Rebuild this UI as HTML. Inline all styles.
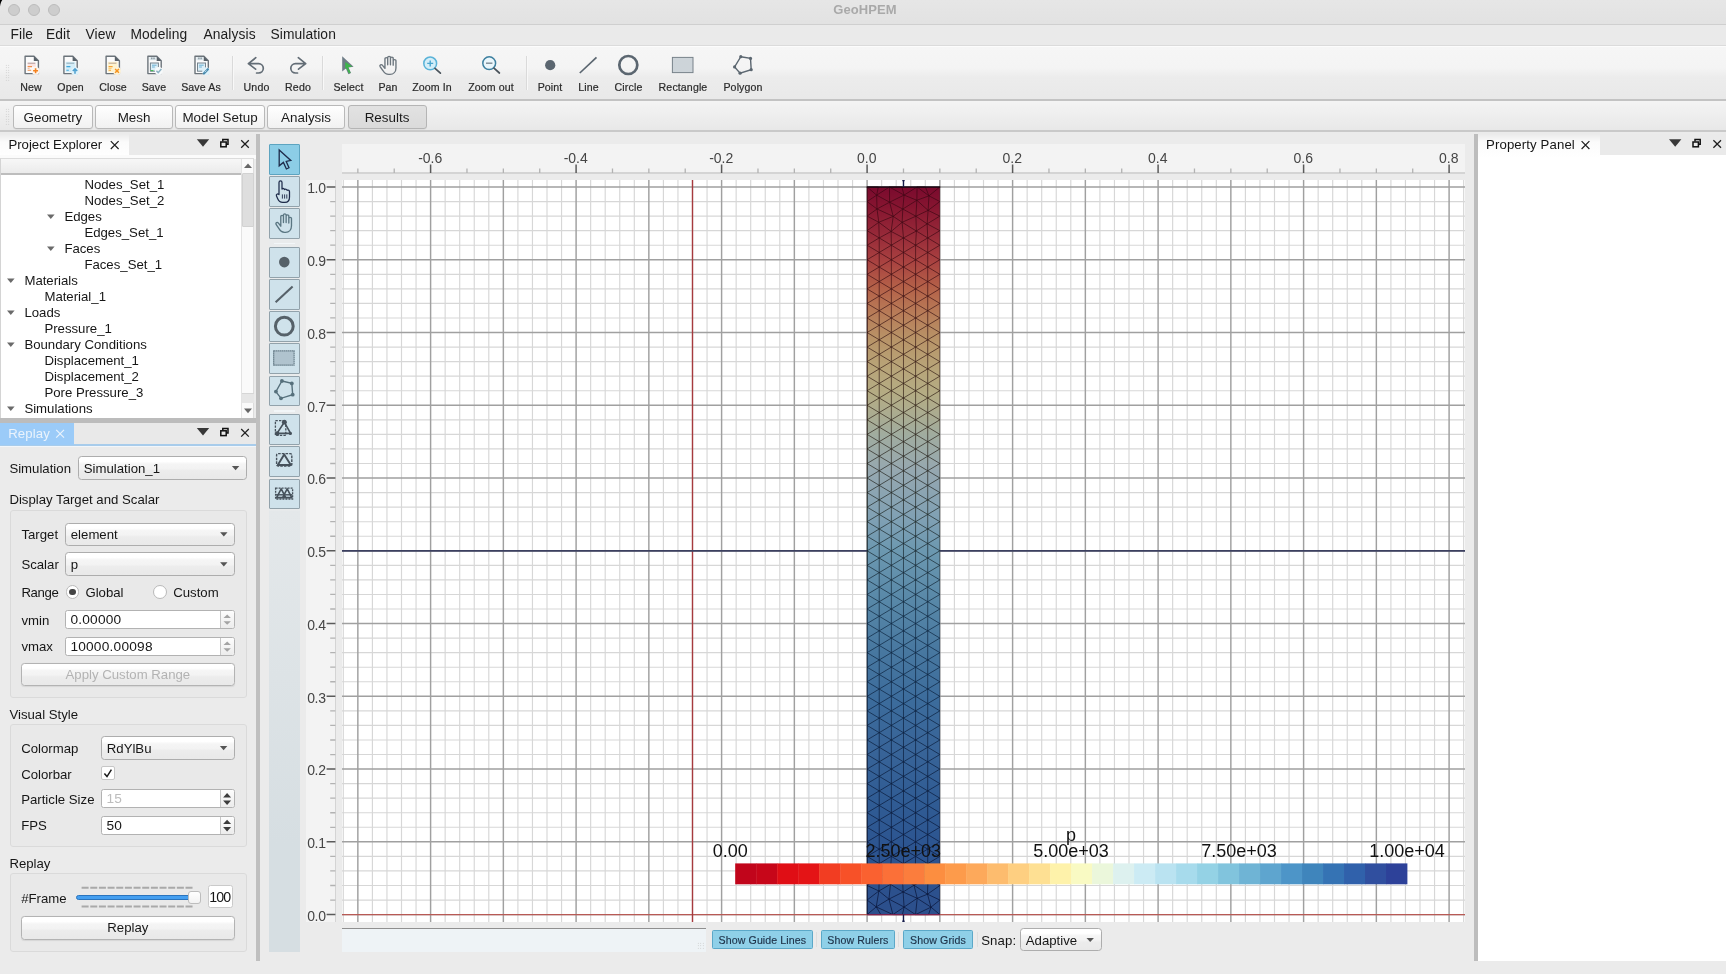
<!DOCTYPE html>
<html><head><meta charset="utf-8"><title>GeoHPEM</title>
<style>
*{box-sizing:border-box;margin:0;padding:0}
html,body{width:1726px;height:974px;overflow:hidden;background:#ebebeb;font-family:"Liberation Sans",sans-serif;font-size:13px;color:#1a1a1a}
.a{position:absolute}
.t{position:absolute;white-space:nowrap;line-height:16px;height:16px}
svg{position:absolute;overflow:visible}
#titlebar{left:0;top:0;width:1726px;height:25px;background:linear-gradient(#e6e6e6,#e2e2e2);border-bottom:1px solid #cfcfcf}
.tl{position:absolute;top:4px;width:12px;height:12px;border-radius:6px;background:#cdcdcd;border:0.9px solid #bcbcbc}
#title{left:2px;width:1726px;text-align:center;top:1.9px;font-weight:bold;font-size:13px;color:#a9a9a9;letter-spacing:0.1px}
#menubar{left:0;top:25px;width:1726px;height:20.6px;background:#eaeaea;border-bottom:1.6px solid #dbdbdb}
.menu{top:26.6px;font-size:13.8px;color:#1c1c1c;letter-spacing:0.1px}
#toolbar{left:0;top:45.6px;width:1726px;height:55.8px;background:linear-gradient(#f6f6f6 0,#f4f4f4 40%,#ececec 58%,#e9e9e9 100%);border-top:1px solid #fcfcfc;border-bottom:2px solid #c3c3c3}
.tbl{font-size:10.6px;color:#2a2a2a;top:79px;text-align:center;letter-spacing:0.12px;-webkit-text-stroke:0.2px #2a2a2a}
.sep{position:absolute;top:56px;width:1px;height:34px;background:#dadada;border-right:1px solid #f8f8f8;width:2px}
#tabbar{left:0;top:101.4px;width:1726px;height:30.4px;background:linear-gradient(#f4f4f4,#e8e8e8);border-bottom:2px solid #c9c9c9}
.tabbtn{position:absolute;top:105.4px;height:23.2px;border:1px solid #b9b9b9;border-radius:3px;background:linear-gradient(#ffffff,#f1f1f1);font-size:13.4px;text-align:center;line-height:23.4px;color:#1a1a1a;box-shadow:0 0.5px 0.5px rgba(0,0,0,0.08)}
.tabbtn.sel{background:linear-gradient(#e2e2e2,#dadada);border-color:#b5b5b5}
.grip{position:absolute;width:5px;background-image:radial-gradient(circle,#c4c4c4 0.6px,transparent 0.8px);background-size:2.5px 2.5px}

.dockhdr{position:absolute;height:21px;background:#eaeaea}
.ui{font-size:13.2px;color:#161616}
.t.ui{margin-top:0.7px}
.tree{font-size:13.2px;color:#161616}
.combo{position:absolute;border:1px solid #adadad;border-radius:3.5px;background:linear-gradient(#ffffff 0,#ffffff 20%,#f5f5f5 32%,#f3f3f3 52%,#ececec 62%,#e9e9e9 100%)}
.combo .t{top:3.4px;left:4.6px}
.spin{position:absolute;border:1px solid #b2b2b2;border-radius:2.5px;background:#fff}
.spin .t{top:0.7px;left:4.2px;letter-spacing:0.22px;font-size:13.7px}
.spin .st{position:absolute;right:0;top:0;bottom:0;width:14px;border-left:1px solid #c6c6c6;background:linear-gradient(#fdfdfd,#ececec);border-radius:0 2px 2px 0}
.gbox{position:absolute;border:1px solid #dadada;border-radius:3px;background:#e9e9e9}
.btn{position:absolute;border:1px solid #b3b3b3;border-radius:3.5px;background:linear-gradient(#ffffff 0,#ffffff 20%,#f5f5f5 32%,#f3f3f3 52%,#ececec 62%,#e9e9e9 100%);text-align:center;font-size:13.2px;box-shadow:0 0.5px 1px rgba(0,0,0,0.08)}

.vbtn{position:absolute;left:269.2px;width:30.8px;height:30.4px;background:#cfe2eb;border:1px solid #92a2ab;border-radius:1px}
.vbtn.sel{background:#8ccde6;border-color:#5da4c0}
.sbtn{position:absolute;top:930.2px;height:18.6px;background:#8fd0e8;border:1px solid #5ba8c8;border-radius:1.5px;font-size:10.6px;letter-spacing:0.1px;color:#1d3148;text-align:center;line-height:18.2px;-webkit-text-stroke:0.15px #1d3148}

#root{position:absolute;left:0;top:0;width:1726px;height:974px;will-change:transform}
.rl{font-size:14px;color:#454545;letter-spacing:0}
.rl.lft{letter-spacing:-0.3px}
.cbl{font-size:18px;color:#111;line-height:20px;height:20px}
</style></head>
<body>
<div id="root">
<div id="titlebar" class="a"></div>
<div class="tl" style="left:8px"></div>
<div class="tl" style="left:28px"></div>
<div class="tl" style="left:48px"></div>
<div id="title" class="t">GeoHPEM</div>
<div id="menubar" class="a"></div>
<div class="t menu" style="left:10.5px">File</div>
<div class="t menu" style="left:46px">Edit</div>
<div class="t menu" style="left:85.5px">View</div>
<div class="t menu" style="left:130.5px">Modeling</div>
<div class="t menu" style="left:203.5px">Analysis</div>
<div class="t menu" style="left:270.5px">Simulation</div>
<div id="toolbar" class="a"></div>
<div class="grip" style="left:5px;top:64px;height:18px"></div>
<div class="t tbl" style="left:-9px;width:80px">New</div>
<div class="t tbl" style="left:30.5px;width:80px">Open</div>
<div class="t tbl" style="left:73px;width:80px">Close</div>
<div class="t tbl" style="left:114px;width:80px">Save</div>
<div class="t tbl" style="left:161px;width:80px">Save As</div>
<div class="t tbl" style="left:216.5px;width:80px">Undo</div>
<div class="t tbl" style="left:258px;width:80px">Redo</div>
<div class="t tbl" style="left:308.5px;width:80px">Select</div>
<div class="t tbl" style="left:348px;width:80px">Pan</div>
<div class="t tbl" style="left:392px;width:80px">Zoom In</div>
<div class="t tbl" style="left:451px;width:80px">Zoom out</div>
<div class="t tbl" style="left:510px;width:80px">Point</div>
<div class="t tbl" style="left:548.5px;width:80px">Line</div>
<div class="t tbl" style="left:588.5px;width:80px">Circle</div>
<div class="t tbl" style="left:643px;width:80px">Rectangle</div>
<div class="t tbl" style="left:703px;width:80px">Polygon</div>
<div class="sep" style="left:232px"></div>
<div class="sep" style="left:322px"></div>
<div class="sep" style="left:526px"></div>
<div id="tabbar" class="a"></div>
<div class="grip" style="left:5px;top:108px;height:18px"></div>
<div class="tabbtn" style="left:13.2px;width:79.5px">Geometry</div>
<div class="tabbtn" style="left:94.7px;width:78.7px">Mesh</div>
<div class="tabbtn" style="left:175.4px;width:89.2px">Model Setup</div>
<div class="tabbtn" style="left:266.6px;width:78.9px">Analysis</div>
<div class="tabbtn sel" style="left:347.5px;width:79px">Results</div>
<div class="dockhdr" style="left:0;top:134px;width:256px"></div>
<div class="a" style="left:0;top:134px;width:129px;height:24px;background:linear-gradient(#ebebeb 0,#f1f1f1 3px,#fbfbfb 8px,#ffffff)"></div>
<div class="a" style="left:0;top:155px;width:256px;height:4px;background:#fbfbfb"></div>
<div class="t ui" style="left:8.4px;top:136.8px">Project Explorer</div>
<div class="a" style="left:0;top:158px;width:254.4px;height:260px;background:#fff;border-top:1px solid #dcdcdc;border-left:1px solid #d4d4d4"></div>
<div class="a" style="left:1px;top:159px;width:240px;height:16px;background:linear-gradient(#f7f7f7,#ebebeb);border-bottom:2px solid #bdbdbd"></div>
<div class="a" style="left:241px;top:159px;width:13.2px;height:259px;background:#fafafa;border-left:1px solid #e3e3e3;border-right:1px solid #dcdcdc"></div>
<div class="a" style="left:241.5px;top:173px;width:12.6px;height:54px;background:#dedede;border:1px solid #d2d2d2;border-radius:1px"></div>
<div class="a" style="left:241.5px;top:393px;width:12.4px;height:10px;background:#e6e6e6;border-top:1px solid #d6d6d6"></div>
<div class="t tree" style="left:84.4px;top:176.6px">Nodes_Set_1</div>
<div class="t tree" style="left:84.4px;top:192.6px">Nodes_Set_2</div>
<div class="t tree" style="left:64.4px;top:208.6px">Edges</div>
<div class="t tree" style="left:84.4px;top:224.6px">Edges_Set_1</div>
<div class="t tree" style="left:64.4px;top:240.6px">Faces</div>
<div class="t tree" style="left:84.4px;top:256.6px">Faces_Set_1</div>
<div class="t tree" style="left:24.4px;top:272.6px">Materials</div>
<div class="t tree" style="left:44.4px;top:288.6px">Material_1</div>
<div class="t tree" style="left:24.4px;top:304.6px">Loads</div>
<div class="t tree" style="left:44.4px;top:320.6px">Pressure_1</div>
<div class="t tree" style="left:24.4px;top:336.6px">Boundary Conditions</div>
<div class="t tree" style="left:44.4px;top:352.6px">Displacement_1</div>
<div class="t tree" style="left:44.4px;top:368.6px">Displacement_2</div>
<div class="t tree" style="left:44.4px;top:384.6px">Pore Pressure_3</div>
<div class="t tree" style="left:24.4px;top:400.6px">Simulations</div>
<div class="a" style="left:0;top:418px;width:256px;height:4.6px;background:#bcbcbc"></div>
<div class="a" style="left:0;top:422.6px;width:256px;height:21.6px;background:#e9e9e9"></div>
<div class="a" style="left:0;top:444px;width:256px;height:2px;background:#a8cceb"></div>
<div class="a" style="left:0;top:446px;width:256px;height:1.2px;background:#f2f6fa"></div>
<div class="a" style="left:0;top:422.6px;width:74px;height:22.6px;background:#9bcbf8"></div>
<div class="t ui" style="left:8.2px;top:425.6px;color:#eaf3fc;letter-spacing:0.1px">Replay</div>
<div class="t ui" style="left:9.4px;top:460.4px">Simulation</div>
<div class="combo ui" style="left:78.2px;top:456.4px;width:168.4px;height:23.2px"><div class="t">Simulation_1</div></div>
<div class="t ui" style="left:9.4px;top:491.8px">Display Target and Scalar</div>
<div class="gbox" style="left:10px;top:510.4px;width:236.6px;height:188px"></div>
<div class="t ui" style="left:21.4px;top:526.4px">Target</div>
<div class="combo ui" style="left:65.2px;top:522.5px;width:169.6px;height:23.2px"><div class="t">element</div></div>
<div class="t ui" style="left:21.4px;top:556.4px">Scalar</div>
<div class="combo ui" style="left:65.2px;top:552.4px;width:169.6px;height:23.2px"><div class="t">p</div></div>
<div class="t ui" style="left:21.4px;top:584.2px;letter-spacing:-0.35px">Range</div>
<div class="a" style="left:65.8px;top:585.2px;width:13.4px;height:13.4px;border-radius:7px;background:#fff;border:1px solid #b9b9b9"></div>
<div class="a" style="left:69.3px;top:588.7px;width:6.4px;height:6.4px;border-radius:3.2px;background:#444"></div>
<div class="t ui" style="left:85.4px;top:584.2px">Global</div>
<div class="a" style="left:153.4px;top:585.2px;width:13.4px;height:13.4px;border-radius:7px;background:#fff;border:1px solid #b9b9b9"></div>
<div class="t ui" style="left:173.2px;top:584.2px">Custom</div>
<div class="t ui" style="left:21.4px;top:612px">vmin</div>
<div class="spin ui" style="left:65.2px;top:610.2px;width:169.6px;height:18.5px"><div class="t">0.00000</div><div class="st"></div></div>
<div class="t ui" style="left:21.4px;top:638.8px">vmax</div>
<div class="spin ui" style="left:65.2px;top:637.2px;width:169.6px;height:18.6px"><div class="t">10000.00098</div><div class="st"></div></div>
<div class="btn" style="left:21px;top:663.4px;width:213.8px;height:23px;color:#b3b3b3;line-height:21.6px">Apply Custom Range</div>
<div class="t ui" style="left:9.4px;top:706px">Visual Style</div>
<div class="gbox" style="left:10px;top:724.4px;width:236.6px;height:123px"></div>
<div class="t ui" style="left:21.2px;top:740.4px">Colormap</div>
<div class="combo ui" style="left:101.2px;top:736.4px;width:133.4px;height:23.2px"><div class="t">RdYlBu</div></div>
<div class="t ui" style="left:21.2px;top:766.6px">Colorbar</div>
<div class="a" style="left:101.3px;top:766.3px;width:13.5px;height:13.7px;background:#fff;border:1px solid #c6c6c6;border-radius:2px"></div>
<div class="t ui" style="left:21.2px;top:791.2px">Particle Size</div>
<div class="spin ui" style="left:101.2px;top:789.1px;width:133.4px;height:18.8px"><div class="t" style="color:#bdbdbd">15</div><div class="st"></div></div>
<div class="t ui" style="left:21.2px;top:817.8px">FPS</div>
<div class="spin ui" style="left:101.2px;top:816.2px;width:133.4px;height:18.4px"><div class="t">50</div><div class="st"></div></div>
<div class="t ui" style="left:9.4px;top:855px">Replay</div>
<div class="gbox" style="left:10px;top:873px;width:236.6px;height:78.6px"></div>
<div class="t ui" style="left:21.2px;top:890px">#Frame</div>
<div class="a" style="left:76.4px;top:894.7px;width:122px;height:5.8px;border-radius:2.9px;background:#459ff0;border:0.9px solid #2b74bd"></div>
<div class="a" style="left:188px;top:891.2px;width:13.2px;height:13.2px;border-radius:3px;background:linear-gradient(#ffffff,#f2f2f2);border:1px solid #bdbdbd"></div>
<div class="a" style="left:208.2px;top:885.4px;width:24.6px;height:22.8px;background:#fff;border:1px solid #cacaca;border-radius:2.5px"></div>
<div class="t ui" style="left:207.4px;top:888.6px;width:24.6px;text-align:center;letter-spacing:-0.85px;font-size:14.2px">100</div>
<div class="btn" style="left:21.2px;top:916.2px;width:213.4px;height:23.4px;line-height:22.4px;color:#161616">Replay</div>
<div class="a" style="left:256px;top:134px;width:4px;height:827px;background:#bfbfbf"></div>
<div class="a" style="left:269.2px;top:143px;width:30.8px;height:809px;background:linear-gradient(#e9ebec 0,#e9ebec 367px,#e4e8ea 368px,#d6dee2 700px,#d6dee2)"></div>
<div class="vbtn sel" style="top:144.2px"></div>
<div class="vbtn" style="top:176.3px"></div>
<div class="vbtn" style="top:208.4px"></div>
<div class="vbtn" style="top:247.4px"></div>
<div class="vbtn" style="top:279.4px"></div>
<div class="vbtn" style="top:311.4px"></div>
<div class="vbtn" style="top:343.4px"></div>
<div class="vbtn" style="top:375.5px"></div>
<div class="vbtn" style="top:414.3px"></div>
<div class="vbtn" style="top:446.4px"></div>
<div class="vbtn" style="top:478.5px"></div>
<div class="a" style="left:274px;top:242.6px;width:21px;height:1.6px;background:#f2f6f8"></div>
<div class="a" style="left:274px;top:410px;width:21px;height:1.6px;background:#f2f6f8"></div>
<div class="a" style="left:342px;top:144px;width:1123px;height:30px;background:#f3f3f3;border-bottom:2px solid #d4d4d4"></div>
<div class="a" style="left:306px;top:180px;width:30px;height:742px;background:#f3f3f3;border-right:1.6px solid #d4d4d4"></div>
<div class="a" style="left:342px;top:180px;width:1123px;height:742px;background:#fff"></div>
<div class="t rl" style="left:400.2px;width:60px;text-align:center;top:150.1px">-0.6</div>
<div class="t rl" style="left:545.7px;width:60px;text-align:center;top:150.1px">-0.4</div>
<div class="t rl" style="left:691.2px;width:60px;text-align:center;top:150.1px">-0.2</div>
<div class="t rl" style="left:836.7px;width:60px;text-align:center;top:150.1px">0.0</div>
<div class="t rl" style="left:982.2px;width:60px;text-align:center;top:150.1px">0.2</div>
<div class="t rl" style="left:1127.7px;width:60px;text-align:center;top:150.1px">0.4</div>
<div class="t rl" style="left:1273.2px;width:60px;text-align:center;top:150.1px">0.6</div>
<div class="t rl" style="left:1418.7px;width:60px;text-align:center;top:150.1px">0.8</div>
<div class="t rl lft" style="left:285.7px;width:40px;text-align:right;top:907.9px">0.0</div>
<div class="t rl lft" style="left:285.7px;width:40px;text-align:right;top:835.1px">0.1</div>
<div class="t rl lft" style="left:285.7px;width:40px;text-align:right;top:762.4px">0.2</div>
<div class="t rl lft" style="left:285.7px;width:40px;text-align:right;top:689.6px">0.3</div>
<div class="t rl lft" style="left:285.7px;width:40px;text-align:right;top:616.9px">0.4</div>
<div class="t rl lft" style="left:285.7px;width:40px;text-align:right;top:544.1px">0.5</div>
<div class="t rl lft" style="left:285.7px;width:40px;text-align:right;top:471.3px">0.6</div>
<div class="t rl lft" style="left:285.7px;width:40px;text-align:right;top:398.6px">0.7</div>
<div class="t rl lft" style="left:285.7px;width:40px;text-align:right;top:325.8px">0.8</div>
<div class="t rl lft" style="left:285.7px;width:40px;text-align:right;top:253.1px">0.9</div>
<div class="t rl lft" style="left:285.7px;width:40px;text-align:right;top:180.3px">1.0</div>
<svg class="a" style="left:0;top:0" width="1726" height="974" viewBox="0 0 1726 974"><path d="M343.30,180V922M372.40,180V922M386.95,180V922M401.50,180V922M416.05,180V922M445.15,180V922M459.70,180V922M474.25,180V922M488.80,180V922M517.90,180V922M532.45,180V922M547.00,180V922M561.55,180V922M590.65,180V922M605.20,180V922M619.75,180V922M634.30,180V922M663.40,180V922M677.95,180V922M692.50,180V922M707.05,180V922M736.15,180V922M750.70,180V922M765.25,180V922M779.80,180V922M808.90,180V922M823.45,180V922M838.00,180V922M852.55,180V922M881.65,180V922M896.20,180V922M910.75,180V922M925.30,180V922M954.40,180V922M968.95,180V922M983.50,180V922M998.05,180V922M1027.15,180V922M1041.70,180V922M1056.25,180V922M1070.80,180V922M1099.90,180V922M1114.45,180V922M1129.00,180V922M1143.55,180V922M1172.65,180V922M1187.20,180V922M1201.75,180V922M1216.30,180V922M1245.40,180V922M1259.95,180V922M1274.50,180V922M1289.05,180V922M1318.15,180V922M1332.70,180V922M1347.25,180V922M1361.80,180V922M1390.90,180V922M1405.45,180V922M1420.00,180V922M1434.55,180V922M1463.65,180V922M342,900.05H1465M342,885.50H1465M342,870.94H1465M342,856.39H1465M342,827.29H1465M342,812.74H1465M342,798.18H1465M342,783.63H1465M342,754.53H1465M342,739.98H1465M342,725.42H1465M342,710.87H1465M342,681.77H1465M342,667.22H1465M342,652.66H1465M342,638.11H1465M342,609.01H1465M342,594.46H1465M342,579.90H1465M342,565.35H1465M342,536.25H1465M342,521.70H1465M342,507.14H1465M342,492.59H1465M342,463.49H1465M342,448.94H1465M342,434.38H1465M342,419.83H1465M342,390.73H1465M342,376.18H1465M342,361.62H1465M342,347.07H1465M342,317.97H1465M342,303.42H1465M342,288.86H1465M342,274.31H1465M342,245.21H1465M342,230.66H1465M342,216.10H1465M342,201.55H1465" stroke="#d7d7d7" stroke-width="1.15" fill="none"/>
<path d="M357.85,180V922M430.60,180V922M503.35,180V922M576.10,180V922M648.85,180V922M721.60,180V922M794.35,180V922M867.10,180V922M939.85,180V922M1012.60,180V922M1085.35,180V922M1158.10,180V922M1230.85,180V922M1303.60,180V922M1376.35,180V922M1449.10,180V922M342,914.60H1465M342,841.84H1465M342,769.08H1465M342,696.32H1465M342,623.56H1465M342,550.80H1465M342,478.04H1465M342,405.28H1465M342,332.52H1465M342,259.76H1465M342,187.00H1465" stroke="#a0a0a0" stroke-width="1.45" fill="none"/>
<path d="M342,914.60H1465" stroke="#b85a55" stroke-width="1.05"/>
<path d="M692.50,180V922" stroke="#a63a3e" stroke-width="1.4"/>
<path d="M342,550.80H1465" stroke="#3c4060" stroke-width="1.7"/>
<path d="M357.85,168.4V173M394.23,168.4V173M466.97,168.4V173M503.35,168.4V173M539.73,168.4V173M612.48,168.4V173M648.85,168.4V173M685.23,168.4V173M757.98,168.4V173M794.35,168.4V173M830.73,168.4V173M903.48,168.4V173M939.85,168.4V173M976.23,168.4V173M1048.97,168.4V173M1085.35,168.4V173M1121.73,168.4V173M1194.47,168.4V173M1230.85,168.4V173M1267.23,168.4V173M1339.97,168.4V173M1376.35,168.4V173M1412.72,168.4V173M330.2,900.05H335.4M330.2,885.50H335.4M330.2,870.94H335.4M330.2,856.39H335.4M330.2,827.29H335.4M330.2,812.74H335.4M330.2,798.18H335.4M330.2,783.63H335.4M330.2,754.53H335.4M330.2,739.98H335.4M330.2,725.42H335.4M330.2,710.87H335.4M330.2,681.77H335.4M330.2,667.22H335.4M330.2,652.66H335.4M330.2,638.11H335.4M330.2,609.01H335.4M330.2,594.46H335.4M330.2,579.90H335.4M330.2,565.35H335.4M330.2,536.25H335.4M330.2,521.70H335.4M330.2,507.14H335.4M330.2,492.59H335.4M330.2,463.49H335.4M330.2,448.94H335.4M330.2,434.38H335.4M330.2,419.83H335.4M330.2,390.73H335.4M330.2,376.18H335.4M330.2,361.62H335.4M330.2,347.07H335.4M330.2,317.97H335.4M330.2,303.42H335.4M330.2,288.86H335.4M330.2,274.31H335.4M330.2,245.21H335.4M330.2,230.66H335.4M330.2,216.10H335.4M330.2,201.55H335.4" stroke="#b2b2b2" stroke-width="1.3" fill="none"/>
<path d="M430.60,164.6V173M576.10,164.6V173M721.60,164.6V173M867.10,164.6V173M1012.60,164.6V173M1158.10,164.6V173M1303.60,164.6V173M1449.10,164.6V173M326.6,914.60H335.4M326.6,841.84H335.4M326.6,769.08H335.4M326.6,696.32H335.4M326.6,623.56H335.4M326.6,550.80H335.4M326.6,478.04H335.4M326.6,405.28H335.4M326.6,332.52H335.4M326.6,259.76H335.4M326.6,187.00H335.4" stroke="#5a5a5a" stroke-width="1.5" fill="none"/>
<defs><linearGradient id="mg" x1="0" y1="0" x2="0" y2="1"><stop offset="0.0000" stop-color="rgb(122, 10, 46)"/><stop offset="0.0275" stop-color="rgb(134, 21, 48)"/><stop offset="0.0632" stop-color="rgb(150, 40, 56)"/><stop offset="0.1003" stop-color="rgb(168, 64, 64)"/><stop offset="0.1374" stop-color="rgb(180, 96, 72)"/><stop offset="0.1732" stop-color="rgb(184, 124, 88)"/><stop offset="0.2103" stop-color="rgb(184, 148, 104)"/><stop offset="0.2474" stop-color="rgb(184, 164, 120)"/><stop offset="0.2845" stop-color="rgb(180, 172, 132)"/><stop offset="0.3202" stop-color="rgb(168, 172, 148)"/><stop offset="0.3422" stop-color="rgb(160, 172, 160)"/><stop offset="0.3889" stop-color="rgb(150, 168, 176)"/><stop offset="0.4577" stop-color="rgb(127, 160, 180)"/><stop offset="0.4989" stop-color="rgb(108, 152, 176)"/><stop offset="0.5676" stop-color="rgb(88, 136, 168)"/><stop offset="0.6363" stop-color="rgb(72, 120, 160)"/><stop offset="0.7051" stop-color="rgb(60, 108, 156)"/><stop offset="0.7738" stop-color="rgb(56, 100, 152)"/><stop offset="0.8425" stop-color="rgb(48, 92, 148)"/><stop offset="0.9112" stop-color="rgb(44, 84, 144)"/><stop offset="1.0005" stop-color="rgb(44, 79, 140)"/></linearGradient><linearGradient id="lg" gradientUnits="userSpaceOnUse" x1="0" y1="187.0" x2="0" y2="914.6"><stop offset="0" stop-color="#3a0412"/><stop offset="0.12" stop-color="#3a0a10"/><stop offset="0.3" stop-color="#2a1a10"/><stop offset="0.45" stop-color="#18201c"/><stop offset="0.6" stop-color="#08203a"/><stop offset="1" stop-color="#050e30"/></linearGradient></defs>
<rect x="867.10" y="187.00" width="72.75" height="727.60" fill="url(#mg)"/>
<path d="M878.34,187.00L876.66,195.16M876.66,195.16L877.00,208.98M877.00,208.98L878.81,222.29M878.81,222.29L879.23,237.93M879.23,237.93L879.23,252.48M879.23,252.48L879.23,267.04M879.23,267.04L879.23,281.59M879.23,281.59L879.23,296.14M879.23,296.14L879.23,310.69M879.23,310.69L879.23,325.24M879.23,325.24L879.23,339.80M879.23,339.80L879.23,354.35M879.23,354.35L879.23,368.90M879.23,368.90L879.23,383.45M879.23,383.45L879.23,398.00M879.23,398.00L879.23,412.56M879.23,412.56L879.23,427.11M879.23,427.11L879.23,441.66M879.23,441.66L879.23,456.21M879.23,456.21L879.23,470.76M879.23,470.76L879.23,485.32M879.23,485.32L879.23,499.87M879.23,499.87L879.23,514.42M879.23,514.42L879.23,528.97M879.23,528.97L879.23,543.52M879.23,543.52L879.23,558.08M879.23,558.08L879.23,572.63M879.23,572.63L879.23,587.18M879.23,587.18L879.23,601.73M879.23,601.73L879.23,616.28M879.23,616.28L879.23,630.84M879.23,630.84L879.23,645.39M879.23,645.39L879.23,659.94M879.23,659.94L879.23,674.49M879.23,674.49L879.23,689.04M879.23,689.04L879.23,703.60M879.23,703.60L879.23,718.15M879.23,718.15L879.23,732.70M879.23,732.70L879.23,747.25M879.23,747.25L879.23,761.80M879.23,761.80L879.23,776.36M879.23,776.36L879.23,790.91M879.23,790.91L879.23,805.46M879.23,805.46L879.23,820.01M879.23,820.01L879.23,834.56M879.23,834.56L879.23,849.12M879.23,849.12L879.23,863.67M879.23,863.67L879.25,877.08M879.25,877.08L878.88,890.98M878.88,890.98L876.22,906.88M876.22,906.88L880.86,914.60M889.47,187.00L889.61,202.19M889.61,202.19L893.21,216.36M893.21,216.36L891.14,231.43M891.14,231.43L891.35,245.21M891.35,245.21L891.35,259.76M891.35,259.76L891.35,274.31M891.35,274.31L891.35,288.86M891.35,288.86L891.35,303.42M891.35,303.42L891.35,317.97M891.35,317.97L891.35,332.52M891.35,332.52L891.35,347.07M891.35,347.07L891.35,361.62M891.35,361.62L891.35,376.18M891.35,376.18L891.35,390.73M891.35,390.73L891.35,405.28M891.35,405.28L891.35,419.83M891.35,419.83L891.35,434.38M891.35,434.38L891.35,448.94M891.35,448.94L891.35,463.49M891.35,463.49L891.35,478.04M891.35,478.04L891.35,492.59M891.35,492.59L891.35,507.14M891.35,507.14L891.35,521.70M891.35,521.70L891.35,536.25M891.35,536.25L891.35,550.80M891.35,550.80L891.35,565.35M891.35,565.35L891.35,579.90M891.35,579.90L891.35,594.46M891.35,594.46L891.35,609.01M891.35,609.01L891.35,623.56M891.35,623.56L891.35,638.11M891.35,638.11L891.35,652.66M891.35,652.66L891.35,667.22M891.35,667.22L891.35,681.77M891.35,681.77L891.35,696.32M891.35,696.32L891.35,710.87M891.35,710.87L891.35,725.42M891.35,725.42L891.35,739.98M891.35,739.98L891.35,754.53M891.35,754.53L891.35,769.08M891.35,769.08L891.35,783.63M891.35,783.63L891.35,798.18M891.35,798.18L891.35,812.74M891.35,812.74L891.35,827.29M891.35,827.29L891.35,841.84M891.35,841.84L891.35,856.39M891.35,856.39L890.43,871.52M890.43,871.52L890.48,884.31M890.48,884.31L888.95,899.09M888.95,899.09L892.93,914.60M901.88,187.00L904.07,195.09M904.07,195.09L902.81,209.03M902.81,209.03L902.13,222.29M902.13,222.29L903.48,237.93M903.48,237.93L903.48,252.48M903.48,252.48L903.48,267.04M903.48,267.04L903.48,281.59M903.48,281.59L903.48,296.14M903.48,296.14L903.48,310.69M903.48,310.69L903.48,325.24M903.48,325.24L903.48,339.80M903.48,339.80L903.48,354.35M903.48,354.35L903.48,368.90M903.48,368.90L903.48,383.45M903.48,383.45L903.48,398.00M903.48,398.00L903.48,412.56M903.48,412.56L903.48,427.11M903.48,427.11L903.48,441.66M903.48,441.66L903.48,456.21M903.48,456.21L903.48,470.76M903.48,470.76L903.48,485.32M903.48,485.32L903.48,499.87M903.48,499.87L903.48,514.42M903.48,514.42L903.48,528.97M903.48,528.97L903.48,543.52M903.48,543.52L903.48,558.08M903.48,558.08L903.48,572.63M903.48,572.63L903.48,587.18M903.48,587.18L903.48,601.73M903.48,601.73L903.48,616.28M903.48,616.28L903.48,630.84M903.48,630.84L903.48,645.39M903.48,645.39L903.48,659.94M903.48,659.94L903.48,674.49M903.48,674.49L903.48,689.04M903.48,689.04L903.48,703.60M903.48,703.60L903.48,718.15M903.48,718.15L903.48,732.70M903.48,732.70L903.48,747.25M903.48,747.25L903.48,761.80M903.48,761.80L903.48,776.36M903.48,776.36L903.48,790.91M903.48,790.91L903.48,805.46M903.48,805.46L903.48,820.01M903.48,820.01L903.48,834.56M903.48,834.56L903.48,849.12M903.48,849.12L903.48,863.67M903.48,863.67L902.57,878.67M902.57,878.67L903.10,892.00M903.10,892.00L904.10,907.05M904.10,907.05L902.47,914.60M917.07,187.00L916.85,200.27M916.85,200.27L915.91,216.19M915.91,216.19L916.36,231.03M916.36,231.03L915.60,245.21M915.60,245.21L915.60,259.76M915.60,259.76L915.60,274.31M915.60,274.31L915.60,288.86M915.60,288.86L915.60,303.42M915.60,303.42L915.60,317.97M915.60,317.97L915.60,332.52M915.60,332.52L915.60,347.07M915.60,347.07L915.60,361.62M915.60,361.62L915.60,376.18M915.60,376.18L915.60,390.73M915.60,390.73L915.60,405.28M915.60,405.28L915.60,419.83M915.60,419.83L915.60,434.38M915.60,434.38L915.60,448.94M915.60,448.94L915.60,463.49M915.60,463.49L915.60,478.04M915.60,478.04L915.60,492.59M915.60,492.59L915.60,507.14M915.60,507.14L915.60,521.70M915.60,521.70L915.60,536.25M915.60,536.25L915.60,550.80M915.60,550.80L915.60,565.35M915.60,565.35L915.60,579.90M915.60,579.90L915.60,594.46M915.60,594.46L915.60,609.01M915.60,609.01L915.60,623.56M915.60,623.56L915.60,638.11M915.60,638.11L915.60,652.66M915.60,652.66L915.60,667.22M915.60,667.22L915.60,681.77M915.60,681.77L915.60,696.32M915.60,696.32L915.60,710.87M915.60,710.87L915.60,725.42M915.60,725.42L915.60,739.98M915.60,739.98L915.60,754.53M915.60,754.53L915.60,769.08M915.60,769.08L915.60,783.63M915.60,783.63L915.60,798.18M915.60,798.18L915.60,812.74M915.60,812.74L915.60,827.29M915.60,827.29L915.60,841.84M915.60,841.84L915.60,856.39M915.60,856.39L915.17,871.72M915.17,871.72L914.01,885.22M914.01,885.22L917.21,898.30M917.21,898.30L915.54,914.60M925.42,187.00L928.96,195.83M928.96,195.83L928.11,210.39M928.11,210.39L927.15,223.86M927.15,223.86L927.73,237.93M927.73,237.93L927.73,252.48M927.73,252.48L927.73,267.04M927.73,267.04L927.73,281.59M927.73,281.59L927.73,296.14M927.73,296.14L927.73,310.69M927.73,310.69L927.73,325.24M927.73,325.24L927.73,339.80M927.73,339.80L927.73,354.35M927.73,354.35L927.73,368.90M927.73,368.90L927.73,383.45M927.73,383.45L927.73,398.00M927.73,398.00L927.73,412.56M927.73,412.56L927.73,427.11M927.73,427.11L927.73,441.66M927.73,441.66L927.73,456.21M927.73,456.21L927.73,470.76M927.73,470.76L927.73,485.32M927.73,485.32L927.73,499.87M927.73,499.87L927.73,514.42M927.73,514.42L927.73,528.97M927.73,528.97L927.73,543.52M927.73,543.52L927.73,558.08M927.73,558.08L927.73,572.63M927.73,572.63L927.73,587.18M927.73,587.18L927.73,601.73M927.73,601.73L927.73,616.28M927.73,616.28L927.73,630.84M927.73,630.84L927.73,645.39M927.73,645.39L927.73,659.94M927.73,659.94L927.73,674.49M927.73,674.49L927.73,689.04M927.73,689.04L927.73,703.60M927.73,703.60L927.73,718.15M927.73,718.15L927.73,732.70M927.73,732.70L927.73,747.25M927.73,747.25L927.73,761.80M927.73,761.80L927.73,776.36M927.73,776.36L927.73,790.91M927.73,790.91L927.73,805.46M927.73,805.46L927.73,820.01M927.73,820.01L927.73,834.56M927.73,834.56L927.73,849.12M927.73,849.12L927.73,863.67M927.73,863.67L928.02,878.42M928.02,878.42L927.50,894.19M927.50,894.19L930.99,907.17M930.99,907.17L928.55,914.60M867.10,187.00L878.34,187.00M867.10,187.00L876.66,195.16M867.10,201.55L876.66,195.16M867.10,201.55L877.00,208.98M867.10,216.10L877.00,208.98M867.10,216.10L878.81,222.29M867.10,230.66L878.81,222.29M867.10,230.66L879.23,237.93M867.10,245.21L879.23,237.93M867.10,245.21L879.23,252.48M867.10,259.76L879.23,252.48M867.10,259.76L879.23,267.04M867.10,274.31L879.23,267.04M867.10,274.31L879.23,281.59M867.10,288.86L879.23,281.59M867.10,288.86L879.23,296.14M867.10,303.42L879.23,296.14M867.10,303.42L879.23,310.69M867.10,317.97L879.23,310.69M867.10,317.97L879.23,325.24M867.10,332.52L879.23,325.24M867.10,332.52L879.23,339.80M867.10,347.07L879.23,339.80M867.10,347.07L879.23,354.35M867.10,361.62L879.23,354.35M867.10,361.62L879.23,368.90M867.10,376.18L879.23,368.90M867.10,376.18L879.23,383.45M867.10,390.73L879.23,383.45M867.10,390.73L879.23,398.00M867.10,405.28L879.23,398.00M867.10,405.28L879.23,412.56M867.10,419.83L879.23,412.56M867.10,419.83L879.23,427.11M867.10,434.38L879.23,427.11M867.10,434.38L879.23,441.66M867.10,448.94L879.23,441.66M867.10,448.94L879.23,456.21M867.10,463.49L879.23,456.21M867.10,463.49L879.23,470.76M867.10,478.04L879.23,470.76M867.10,478.04L879.23,485.32M867.10,492.59L879.23,485.32M867.10,492.59L879.23,499.87M867.10,507.14L879.23,499.87M867.10,507.14L879.23,514.42M867.10,521.70L879.23,514.42M867.10,521.70L879.23,528.97M867.10,536.25L879.23,528.97M867.10,536.25L879.23,543.52M867.10,550.80L879.23,543.52M867.10,550.80L879.23,558.08M867.10,565.35L879.23,558.08M867.10,565.35L879.23,572.63M867.10,579.90L879.23,572.63M867.10,579.90L879.23,587.18M867.10,594.46L879.23,587.18M867.10,594.46L879.23,601.73M867.10,609.01L879.23,601.73M867.10,609.01L879.23,616.28M867.10,623.56L879.23,616.28M867.10,623.56L879.23,630.84M867.10,638.11L879.23,630.84M867.10,638.11L879.23,645.39M867.10,652.66L879.23,645.39M867.10,652.66L879.23,659.94M867.10,667.22L879.23,659.94M867.10,667.22L879.23,674.49M867.10,681.77L879.23,674.49M867.10,681.77L879.23,689.04M867.10,696.32L879.23,689.04M867.10,696.32L879.23,703.60M867.10,710.87L879.23,703.60M867.10,710.87L879.23,718.15M867.10,725.42L879.23,718.15M867.10,725.42L879.23,732.70M867.10,739.98L879.23,732.70M867.10,739.98L879.23,747.25M867.10,754.53L879.23,747.25M867.10,754.53L879.23,761.80M867.10,769.08L879.23,761.80M867.10,769.08L879.23,776.36M867.10,783.63L879.23,776.36M867.10,783.63L879.23,790.91M867.10,798.18L879.23,790.91M867.10,798.18L879.23,805.46M867.10,812.74L879.23,805.46M867.10,812.74L879.23,820.01M867.10,827.29L879.23,820.01M867.10,827.29L879.23,834.56M867.10,841.84L879.23,834.56M867.10,841.84L879.23,849.12M867.10,856.39L879.23,849.12M867.10,856.39L879.23,863.67M867.10,870.94L879.23,863.67M867.10,870.94L879.25,877.08M867.10,885.50L879.25,877.08M867.10,885.50L878.88,890.98M867.10,900.05L878.88,890.98M867.10,900.05L876.22,906.88M867.10,914.60L876.22,906.88M867.10,914.60L880.86,914.60M876.66,195.16L889.47,187.00M876.66,195.16L889.61,202.19M877.00,208.98L889.61,202.19M877.00,208.98L893.21,216.36M878.81,222.29L893.21,216.36M878.81,222.29L891.14,231.43M879.23,237.93L891.14,231.43M879.23,237.93L891.35,245.21M879.23,252.48L891.35,245.21M879.23,252.48L891.35,259.76M879.23,267.04L891.35,259.76M879.23,267.04L891.35,274.31M879.23,281.59L891.35,274.31M879.23,281.59L891.35,288.86M879.23,296.14L891.35,288.86M879.23,296.14L891.35,303.42M879.23,310.69L891.35,303.42M879.23,310.69L891.35,317.97M879.23,325.24L891.35,317.97M879.23,325.24L891.35,332.52M879.23,339.80L891.35,332.52M879.23,339.80L891.35,347.07M879.23,354.35L891.35,347.07M879.23,354.35L891.35,361.62M879.23,368.90L891.35,361.62M879.23,368.90L891.35,376.18M879.23,383.45L891.35,376.18M879.23,383.45L891.35,390.73M879.23,398.00L891.35,390.73M879.23,398.00L891.35,405.28M879.23,412.56L891.35,405.28M879.23,412.56L891.35,419.83M879.23,427.11L891.35,419.83M879.23,427.11L891.35,434.38M879.23,441.66L891.35,434.38M879.23,441.66L891.35,448.94M879.23,456.21L891.35,448.94M879.23,456.21L891.35,463.49M879.23,470.76L891.35,463.49M879.23,470.76L891.35,478.04M879.23,485.32L891.35,478.04M879.23,485.32L891.35,492.59M879.23,499.87L891.35,492.59M879.23,499.87L891.35,507.14M879.23,514.42L891.35,507.14M879.23,514.42L891.35,521.70M879.23,528.97L891.35,521.70M879.23,528.97L891.35,536.25M879.23,543.52L891.35,536.25M879.23,543.52L891.35,550.80M879.23,558.08L891.35,550.80M879.23,558.08L891.35,565.35M879.23,572.63L891.35,565.35M879.23,572.63L891.35,579.90M879.23,587.18L891.35,579.90M879.23,587.18L891.35,594.46M879.23,601.73L891.35,594.46M879.23,601.73L891.35,609.01M879.23,616.28L891.35,609.01M879.23,616.28L891.35,623.56M879.23,630.84L891.35,623.56M879.23,630.84L891.35,638.11M879.23,645.39L891.35,638.11M879.23,645.39L891.35,652.66M879.23,659.94L891.35,652.66M879.23,659.94L891.35,667.22M879.23,674.49L891.35,667.22M879.23,674.49L891.35,681.77M879.23,689.04L891.35,681.77M879.23,689.04L891.35,696.32M879.23,703.60L891.35,696.32M879.23,703.60L891.35,710.87M879.23,718.15L891.35,710.87M879.23,718.15L891.35,725.42M879.23,732.70L891.35,725.42M879.23,732.70L891.35,739.98M879.23,747.25L891.35,739.98M879.23,747.25L891.35,754.53M879.23,761.80L891.35,754.53M879.23,761.80L891.35,769.08M879.23,776.36L891.35,769.08M879.23,776.36L891.35,783.63M879.23,790.91L891.35,783.63M879.23,790.91L891.35,798.18M879.23,805.46L891.35,798.18M879.23,805.46L891.35,812.74M879.23,820.01L891.35,812.74M879.23,820.01L891.35,827.29M879.23,834.56L891.35,827.29M879.23,834.56L891.35,841.84M879.23,849.12L891.35,841.84M879.23,849.12L891.35,856.39M879.23,863.67L891.35,856.39M879.23,863.67L890.43,871.52M879.25,877.08L890.43,871.52M879.25,877.08L890.48,884.31M878.88,890.98L890.48,884.31M878.88,890.98L888.95,899.09M876.22,906.88L888.95,899.09M876.22,906.88L892.93,914.60M889.47,187.00L901.88,187.00M889.47,187.00L904.07,195.09M889.61,202.19L904.07,195.09M889.61,202.19L902.81,209.03M893.21,216.36L902.81,209.03M893.21,216.36L902.13,222.29M891.14,231.43L902.13,222.29M891.14,231.43L903.48,237.93M891.35,245.21L903.48,237.93M891.35,245.21L903.48,252.48M891.35,259.76L903.48,252.48M891.35,259.76L903.48,267.04M891.35,274.31L903.48,267.04M891.35,274.31L903.48,281.59M891.35,288.86L903.48,281.59M891.35,288.86L903.48,296.14M891.35,303.42L903.48,296.14M891.35,303.42L903.48,310.69M891.35,317.97L903.48,310.69M891.35,317.97L903.48,325.24M891.35,332.52L903.48,325.24M891.35,332.52L903.48,339.80M891.35,347.07L903.48,339.80M891.35,347.07L903.48,354.35M891.35,361.62L903.48,354.35M891.35,361.62L903.48,368.90M891.35,376.18L903.48,368.90M891.35,376.18L903.48,383.45M891.35,390.73L903.48,383.45M891.35,390.73L903.48,398.00M891.35,405.28L903.48,398.00M891.35,405.28L903.48,412.56M891.35,419.83L903.48,412.56M891.35,419.83L903.48,427.11M891.35,434.38L903.48,427.11M891.35,434.38L903.48,441.66M891.35,448.94L903.48,441.66M891.35,448.94L903.48,456.21M891.35,463.49L903.48,456.21M891.35,463.49L903.48,470.76M891.35,478.04L903.48,470.76M891.35,478.04L903.48,485.32M891.35,492.59L903.48,485.32M891.35,492.59L903.48,499.87M891.35,507.14L903.48,499.87M891.35,507.14L903.48,514.42M891.35,521.70L903.48,514.42M891.35,521.70L903.48,528.97M891.35,536.25L903.48,528.97M891.35,536.25L903.48,543.52M891.35,550.80L903.48,543.52M891.35,550.80L903.48,558.08M891.35,565.35L903.48,558.08M891.35,565.35L903.48,572.63M891.35,579.90L903.48,572.63M891.35,579.90L903.48,587.18M891.35,594.46L903.48,587.18M891.35,594.46L903.48,601.73M891.35,609.01L903.48,601.73M891.35,609.01L903.48,616.28M891.35,623.56L903.48,616.28M891.35,623.56L903.48,630.84M891.35,638.11L903.48,630.84M891.35,638.11L903.48,645.39M891.35,652.66L903.48,645.39M891.35,652.66L903.48,659.94M891.35,667.22L903.48,659.94M891.35,667.22L903.48,674.49M891.35,681.77L903.48,674.49M891.35,681.77L903.48,689.04M891.35,696.32L903.48,689.04M891.35,696.32L903.48,703.60M891.35,710.87L903.48,703.60M891.35,710.87L903.48,718.15M891.35,725.42L903.48,718.15M891.35,725.42L903.48,732.70M891.35,739.98L903.48,732.70M891.35,739.98L903.48,747.25M891.35,754.53L903.48,747.25M891.35,754.53L903.48,761.80M891.35,769.08L903.48,761.80M891.35,769.08L903.48,776.36M891.35,783.63L903.48,776.36M891.35,783.63L903.48,790.91M891.35,798.18L903.48,790.91M891.35,798.18L903.48,805.46M891.35,812.74L903.48,805.46M891.35,812.74L903.48,820.01M891.35,827.29L903.48,820.01M891.35,827.29L903.48,834.56M891.35,841.84L903.48,834.56M891.35,841.84L903.48,849.12M891.35,856.39L903.48,849.12M891.35,856.39L903.48,863.67M890.43,871.52L903.48,863.67M890.43,871.52L902.57,878.67M890.48,884.31L902.57,878.67M890.48,884.31L903.10,892.00M888.95,899.09L903.10,892.00M888.95,899.09L904.10,907.05M892.93,914.60L904.10,907.05M892.93,914.60L902.47,914.60M904.07,195.09L917.07,187.00M904.07,195.09L916.85,200.27M902.81,209.03L916.85,200.27M902.81,209.03L915.91,216.19M902.13,222.29L915.91,216.19M902.13,222.29L916.36,231.03M903.48,237.93L916.36,231.03M903.48,237.93L915.60,245.21M903.48,252.48L915.60,245.21M903.48,252.48L915.60,259.76M903.48,267.04L915.60,259.76M903.48,267.04L915.60,274.31M903.48,281.59L915.60,274.31M903.48,281.59L915.60,288.86M903.48,296.14L915.60,288.86M903.48,296.14L915.60,303.42M903.48,310.69L915.60,303.42M903.48,310.69L915.60,317.97M903.48,325.24L915.60,317.97M903.48,325.24L915.60,332.52M903.48,339.80L915.60,332.52M903.48,339.80L915.60,347.07M903.48,354.35L915.60,347.07M903.48,354.35L915.60,361.62M903.48,368.90L915.60,361.62M903.48,368.90L915.60,376.18M903.48,383.45L915.60,376.18M903.48,383.45L915.60,390.73M903.48,398.00L915.60,390.73M903.48,398.00L915.60,405.28M903.48,412.56L915.60,405.28M903.48,412.56L915.60,419.83M903.48,427.11L915.60,419.83M903.48,427.11L915.60,434.38M903.48,441.66L915.60,434.38M903.48,441.66L915.60,448.94M903.48,456.21L915.60,448.94M903.48,456.21L915.60,463.49M903.48,470.76L915.60,463.49M903.48,470.76L915.60,478.04M903.48,485.32L915.60,478.04M903.48,485.32L915.60,492.59M903.48,499.87L915.60,492.59M903.48,499.87L915.60,507.14M903.48,514.42L915.60,507.14M903.48,514.42L915.60,521.70M903.48,528.97L915.60,521.70M903.48,528.97L915.60,536.25M903.48,543.52L915.60,536.25M903.48,543.52L915.60,550.80M903.48,558.08L915.60,550.80M903.48,558.08L915.60,565.35M903.48,572.63L915.60,565.35M903.48,572.63L915.60,579.90M903.48,587.18L915.60,579.90M903.48,587.18L915.60,594.46M903.48,601.73L915.60,594.46M903.48,601.73L915.60,609.01M903.48,616.28L915.60,609.01M903.48,616.28L915.60,623.56M903.48,630.84L915.60,623.56M903.48,630.84L915.60,638.11M903.48,645.39L915.60,638.11M903.48,645.39L915.60,652.66M903.48,659.94L915.60,652.66M903.48,659.94L915.60,667.22M903.48,674.49L915.60,667.22M903.48,674.49L915.60,681.77M903.48,689.04L915.60,681.77M903.48,689.04L915.60,696.32M903.48,703.60L915.60,696.32M903.48,703.60L915.60,710.87M903.48,718.15L915.60,710.87M903.48,718.15L915.60,725.42M903.48,732.70L915.60,725.42M903.48,732.70L915.60,739.98M903.48,747.25L915.60,739.98M903.48,747.25L915.60,754.53M903.48,761.80L915.60,754.53M903.48,761.80L915.60,769.08M903.48,776.36L915.60,769.08M903.48,776.36L915.60,783.63M903.48,790.91L915.60,783.63M903.48,790.91L915.60,798.18M903.48,805.46L915.60,798.18M903.48,805.46L915.60,812.74M903.48,820.01L915.60,812.74M903.48,820.01L915.60,827.29M903.48,834.56L915.60,827.29M903.48,834.56L915.60,841.84M903.48,849.12L915.60,841.84M903.48,849.12L915.60,856.39M903.48,863.67L915.60,856.39M903.48,863.67L915.17,871.72M902.57,878.67L915.17,871.72M902.57,878.67L914.01,885.22M903.10,892.00L914.01,885.22M903.10,892.00L917.21,898.30M904.10,907.05L917.21,898.30M904.10,907.05L915.54,914.60M917.07,187.00L925.42,187.00M917.07,187.00L928.96,195.83M916.85,200.27L928.96,195.83M916.85,200.27L928.11,210.39M915.91,216.19L928.11,210.39M915.91,216.19L927.15,223.86M916.36,231.03L927.15,223.86M916.36,231.03L927.73,237.93M915.60,245.21L927.73,237.93M915.60,245.21L927.73,252.48M915.60,259.76L927.73,252.48M915.60,259.76L927.73,267.04M915.60,274.31L927.73,267.04M915.60,274.31L927.73,281.59M915.60,288.86L927.73,281.59M915.60,288.86L927.73,296.14M915.60,303.42L927.73,296.14M915.60,303.42L927.73,310.69M915.60,317.97L927.73,310.69M915.60,317.97L927.73,325.24M915.60,332.52L927.73,325.24M915.60,332.52L927.73,339.80M915.60,347.07L927.73,339.80M915.60,347.07L927.73,354.35M915.60,361.62L927.73,354.35M915.60,361.62L927.73,368.90M915.60,376.18L927.73,368.90M915.60,376.18L927.73,383.45M915.60,390.73L927.73,383.45M915.60,390.73L927.73,398.00M915.60,405.28L927.73,398.00M915.60,405.28L927.73,412.56M915.60,419.83L927.73,412.56M915.60,419.83L927.73,427.11M915.60,434.38L927.73,427.11M915.60,434.38L927.73,441.66M915.60,448.94L927.73,441.66M915.60,448.94L927.73,456.21M915.60,463.49L927.73,456.21M915.60,463.49L927.73,470.76M915.60,478.04L927.73,470.76M915.60,478.04L927.73,485.32M915.60,492.59L927.73,485.32M915.60,492.59L927.73,499.87M915.60,507.14L927.73,499.87M915.60,507.14L927.73,514.42M915.60,521.70L927.73,514.42M915.60,521.70L927.73,528.97M915.60,536.25L927.73,528.97M915.60,536.25L927.73,543.52M915.60,550.80L927.73,543.52M915.60,550.80L927.73,558.08M915.60,565.35L927.73,558.08M915.60,565.35L927.73,572.63M915.60,579.90L927.73,572.63M915.60,579.90L927.73,587.18M915.60,594.46L927.73,587.18M915.60,594.46L927.73,601.73M915.60,609.01L927.73,601.73M915.60,609.01L927.73,616.28M915.60,623.56L927.73,616.28M915.60,623.56L927.73,630.84M915.60,638.11L927.73,630.84M915.60,638.11L927.73,645.39M915.60,652.66L927.73,645.39M915.60,652.66L927.73,659.94M915.60,667.22L927.73,659.94M915.60,667.22L927.73,674.49M915.60,681.77L927.73,674.49M915.60,681.77L927.73,689.04M915.60,696.32L927.73,689.04M915.60,696.32L927.73,703.60M915.60,710.87L927.73,703.60M915.60,710.87L927.73,718.15M915.60,725.42L927.73,718.15M915.60,725.42L927.73,732.70M915.60,739.98L927.73,732.70M915.60,739.98L927.73,747.25M915.60,754.53L927.73,747.25M915.60,754.53L927.73,761.80M915.60,769.08L927.73,761.80M915.60,769.08L927.73,776.36M915.60,783.63L927.73,776.36M915.60,783.63L927.73,790.91M915.60,798.18L927.73,790.91M915.60,798.18L927.73,805.46M915.60,812.74L927.73,805.46M915.60,812.74L927.73,820.01M915.60,827.29L927.73,820.01M915.60,827.29L927.73,834.56M915.60,841.84L927.73,834.56M915.60,841.84L927.73,849.12M915.60,856.39L927.73,849.12M915.60,856.39L927.73,863.67M915.17,871.72L927.73,863.67M915.17,871.72L928.02,878.42M914.01,885.22L928.02,878.42M914.01,885.22L927.50,894.19M917.21,898.30L927.50,894.19M917.21,898.30L930.99,907.17M915.54,914.60L930.99,907.17M915.54,914.60L928.55,914.60M928.96,195.83L939.85,187.00M928.96,195.83L939.85,201.55M928.11,210.39L939.85,201.55M928.11,210.39L939.85,216.10M927.15,223.86L939.85,216.10M927.15,223.86L939.85,230.66M927.73,237.93L939.85,230.66M927.73,237.93L939.85,245.21M927.73,252.48L939.85,245.21M927.73,252.48L939.85,259.76M927.73,267.04L939.85,259.76M927.73,267.04L939.85,274.31M927.73,281.59L939.85,274.31M927.73,281.59L939.85,288.86M927.73,296.14L939.85,288.86M927.73,296.14L939.85,303.42M927.73,310.69L939.85,303.42M927.73,310.69L939.85,317.97M927.73,325.24L939.85,317.97M927.73,325.24L939.85,332.52M927.73,339.80L939.85,332.52M927.73,339.80L939.85,347.07M927.73,354.35L939.85,347.07M927.73,354.35L939.85,361.62M927.73,368.90L939.85,361.62M927.73,368.90L939.85,376.18M927.73,383.45L939.85,376.18M927.73,383.45L939.85,390.73M927.73,398.00L939.85,390.73M927.73,398.00L939.85,405.28M927.73,412.56L939.85,405.28M927.73,412.56L939.85,419.83M927.73,427.11L939.85,419.83M927.73,427.11L939.85,434.38M927.73,441.66L939.85,434.38M927.73,441.66L939.85,448.94M927.73,456.21L939.85,448.94M927.73,456.21L939.85,463.49M927.73,470.76L939.85,463.49M927.73,470.76L939.85,478.04M927.73,485.32L939.85,478.04M927.73,485.32L939.85,492.59M927.73,499.87L939.85,492.59M927.73,499.87L939.85,507.14M927.73,514.42L939.85,507.14M927.73,514.42L939.85,521.70M927.73,528.97L939.85,521.70M927.73,528.97L939.85,536.25M927.73,543.52L939.85,536.25M927.73,543.52L939.85,550.80M927.73,558.08L939.85,550.80M927.73,558.08L939.85,565.35M927.73,572.63L939.85,565.35M927.73,572.63L939.85,579.90M927.73,587.18L939.85,579.90M927.73,587.18L939.85,594.46M927.73,601.73L939.85,594.46M927.73,601.73L939.85,609.01M927.73,616.28L939.85,609.01M927.73,616.28L939.85,623.56M927.73,630.84L939.85,623.56M927.73,630.84L939.85,638.11M927.73,645.39L939.85,638.11M927.73,645.39L939.85,652.66M927.73,659.94L939.85,652.66M927.73,659.94L939.85,667.22M927.73,674.49L939.85,667.22M927.73,674.49L939.85,681.77M927.73,689.04L939.85,681.77M927.73,689.04L939.85,696.32M927.73,703.60L939.85,696.32M927.73,703.60L939.85,710.87M927.73,718.15L939.85,710.87M927.73,718.15L939.85,725.42M927.73,732.70L939.85,725.42M927.73,732.70L939.85,739.98M927.73,747.25L939.85,739.98M927.73,747.25L939.85,754.53M927.73,761.80L939.85,754.53M927.73,761.80L939.85,769.08M927.73,776.36L939.85,769.08M927.73,776.36L939.85,783.63M927.73,790.91L939.85,783.63M927.73,790.91L939.85,798.18M927.73,805.46L939.85,798.18M927.73,805.46L939.85,812.74M927.73,820.01L939.85,812.74M927.73,820.01L939.85,827.29M927.73,834.56L939.85,827.29M927.73,834.56L939.85,841.84M927.73,849.12L939.85,841.84M927.73,849.12L939.85,856.39M927.73,863.67L939.85,856.39M927.73,863.67L939.85,870.94M928.02,878.42L939.85,870.94M928.02,878.42L939.85,885.50M927.50,894.19L939.85,885.50M927.50,894.19L939.85,900.05M930.99,907.17L939.85,900.05M930.99,907.17L939.85,914.60" stroke="url(#lg)" stroke-opacity="0.7" stroke-width="0.95" fill="none"/>
<path d="M867.30,187.00V914.60" stroke="url(#lg)" stroke-opacity="0.8" stroke-width="1.2" fill="none"/>
<path d="M939.65,187.00V914.60" stroke="url(#lg)" stroke-opacity="0.45" stroke-width="1" fill="none"/>
<path d="M866.60,187.00H940.35" stroke="#160610" stroke-width="1.4"/>
<path d="M867.10,914.60H939.85" stroke="#7a2450" stroke-width="1.2"/>
<path d="M903.48,180.2V187.00M902.27,180.6h2.4" stroke="#161c4a" stroke-width="1.4"/>
<path d="M903.48,914.60V921.6M902.27,921.2h2.4" stroke="#161c4a" stroke-width="1.4"/>
<rect x="735.20" y="863.4" width="21.39" height="20.90" fill="rgb(193,5,27)"/>
<rect x="756.19" y="863.4" width="21.39" height="20.90" fill="rgb(199,6,25)"/>
<rect x="777.19" y="863.4" width="21.39" height="20.90" fill="rgb(224,14,21)"/>
<rect x="798.18" y="863.4" width="21.39" height="20.90" fill="rgb(228,20,22)"/>
<rect x="819.18" y="863.4" width="21.39" height="20.90" fill="rgb(242,61,34)"/>
<rect x="840.17" y="863.4" width="21.39" height="20.90" fill="rgb(247,81,40)"/>
<rect x="861.16" y="863.4" width="21.39" height="20.90" fill="rgb(250,97,48)"/>
<rect x="882.16" y="863.4" width="21.39" height="20.90" fill="rgb(251,112,56)"/>
<rect x="903.15" y="863.4" width="21.39" height="20.90" fill="rgb(251,125,61)"/>
<rect x="924.14" y="863.4" width="21.39" height="20.90" fill="rgb(252,142,64)"/>
<rect x="945.14" y="863.4" width="21.39" height="20.90" fill="rgb(253,155,75)"/>
<rect x="966.13" y="863.4" width="21.39" height="20.90" fill="rgb(253,169,91)"/>
<rect x="987.12" y="863.4" width="21.39" height="20.90" fill="rgb(253,188,110)"/>
<rect x="1008.12" y="863.4" width="21.39" height="20.90" fill="rgb(254,207,129)"/>
<rect x="1029.11" y="863.4" width="21.39" height="20.90" fill="rgb(254,224,147)"/>
<rect x="1050.11" y="863.4" width="21.39" height="20.90" fill="rgb(254,242,170)"/>
<rect x="1071.10" y="863.4" width="21.39" height="20.90" fill="rgb(249,250,195)"/>
<rect x="1092.09" y="863.4" width="21.39" height="20.90" fill="rgb(235,247,219)"/>
<rect x="1113.09" y="863.4" width="21.39" height="20.90" fill="rgb(221,241,239)"/>
<rect x="1134.08" y="863.4" width="21.39" height="20.90" fill="rgb(204,235,244)"/>
<rect x="1155.08" y="863.4" width="21.39" height="20.90" fill="rgb(186,227,241)"/>
<rect x="1176.07" y="863.4" width="21.39" height="20.90" fill="rgb(167,219,236)"/>
<rect x="1197.06" y="863.4" width="21.39" height="20.90" fill="rgb(148,210,229)"/>
<rect x="1218.06" y="863.4" width="21.39" height="20.90" fill="rgb(129,196,221)"/>
<rect x="1239.05" y="863.4" width="21.39" height="20.90" fill="rgb(111,180,213)"/>
<rect x="1260.04" y="863.4" width="21.39" height="20.90" fill="rgb(94,165,207)"/>
<rect x="1281.04" y="863.4" width="21.39" height="20.90" fill="rgb(77,149,200)"/>
<rect x="1302.03" y="863.4" width="21.39" height="20.90" fill="rgb(63,133,188)"/>
<rect x="1323.03" y="863.4" width="21.39" height="20.90" fill="rgb(53,115,180)"/>
<rect x="1344.02" y="863.4" width="21.39" height="20.90" fill="rgb(48,97,171)"/>
<rect x="1365.01" y="863.4" width="21.39" height="20.90" fill="rgb(48,79,159)"/>
<rect x="1386.01" y="863.4" width="21.39" height="20.90" fill="rgb(45,65,153)"/></svg>
<div class="t cbl" style="left:670.2px;width:120px;text-align:center;top:840.6px">0.00</div>
<div class="t cbl" style="left:843.2px;width:120px;text-align:center;top:840.6px">2.50e+03</div>
<div class="t cbl" style="left:1011.1px;width:120px;text-align:center;top:840.6px">5.00e+03</div>
<div class="t cbl" style="left:1179.0px;width:120px;text-align:center;top:840.6px">7.50e+03</div>
<div class="t cbl" style="left:1347.0px;width:120px;text-align:center;top:840.6px">1.00e+04</div>
<div class="t cbl" style="left:1011px;width:120px;text-align:center;top:824.6px">p</div>
<div class="a" style="left:342px;top:928px;width:364px;height:24px;background:#eef3f6;border-top:1.2px solid #8f8f8f"></div>
<div class="grip" style="left:697px;top:942px;width:8px;height:8px"></div>
<div class="sbtn" style="left:711.8px;width:101.2px">Show Guide Lines</div>
<div class="sbtn" style="left:820.8px;width:74.2px">Show Rulers</div>
<div class="sbtn" style="left:902.8px;width:70.4px">Show Grids</div>
<div class="a" style="left:816.4px;top:932px;width:1px;height:15px;background:#dedede"></div>
<div class="a" style="left:898.4px;top:932px;width:1px;height:15px;background:#dedede"></div>
<div class="a" style="left:976.8px;top:932px;width:1px;height:15px;background:#dedede"></div>
<div class="t ui" style="left:981.2px;top:932.4px;letter-spacing:0.1px">Snap:</div>
<div class="combo ui" style="left:1020.2px;top:928.4px;width:81.6px;height:23px"><div class="t">Adaptive</div></div>
<div class="a" style="left:1474px;top:134px;width:4px;height:827px;background:#bdbdbd"></div>
<div class="a" style="left:1478px;top:134px;width:248px;height:827px;background:#fff"></div>
<div class="dockhdr" style="left:1478px;top:134px;width:248px"></div>
<div class="a" style="left:1478px;top:134px;width:122px;height:24px;background:linear-gradient(#ebebeb 0,#f1f1f1 3px,#fbfbfb 8px,#ffffff)"></div>
<div class="t ui" style="left:1486px;top:136.4px;letter-spacing:0.12px">Property Panel</div>
<svg class="a" style="left:0;top:0" width="1726" height="974" viewBox="0 0 1726 974"><path d="M110.8,141.2 l7.8,7.8 m0,-7.8 l-7.8,7.8" stroke="#1e1e1e" stroke-width="1.2"/>
<path d="M196.8,139.2 h12.4 l-6.2,7.6 z" fill="#383838"/>
<path d="M222.8,141.6 v-2 h5.2 v4.6 h-1.8" fill="none" stroke="#111" stroke-width="1.5"/>
<rect x="220.8" y="142" width="5.4" height="4.8" fill="none" stroke="#111" stroke-width="1.5"/>
<path d="M241.20000000000002,140.2 l7.6,7.6 m0,-7.6 l-7.6,7.6" stroke="#1e1e1e" stroke-width="1.25"/>
<path d="M244,168 l4,-4.6 l4,4.6 z" fill="#666"/>
<path d="M244,408.6 l4,4.6 l4,-4.6 z" fill="#666"/>
<path d="M47.00000000000001,214.6 h7.6 l-3.8,4.4 z" fill="#6a6a6a"/>
<path d="M47.00000000000001,246.6 h7.6 l-3.8,4.4 z" fill="#6a6a6a"/>
<path d="M6.999999999999999,278.6 h7.6 l-3.8,4.4 z" fill="#6a6a6a"/>
<path d="M6.999999999999999,310.6 h7.6 l-3.8,4.4 z" fill="#6a6a6a"/>
<path d="M6.999999999999999,342.6 h7.6 l-3.8,4.4 z" fill="#6a6a6a"/>
<path d="M6.999999999999999,406.6 h7.6 l-3.8,4.4 z" fill="#6a6a6a"/>
<path d="M56.2,429.8 l7.8,7.8 m0,-7.8 l-7.8,7.8" stroke="#eaf3fc" stroke-width="1.2"/>
<path d="M196.8,428.0 h12.4 l-6.2,7.6 z" fill="#383838"/>
<path d="M222.8,430.40000000000003 v-2 h5.2 v4.6 h-1.8" fill="none" stroke="#111" stroke-width="1.5"/>
<rect x="220.8" y="430.8" width="5.4" height="4.8" fill="none" stroke="#111" stroke-width="1.5"/>
<path d="M241.20000000000002,429.0 l7.6,7.6 m0,-7.6 l-7.6,7.6" stroke="#1e1e1e" stroke-width="1.25"/>
<path d="M231.9,466.09999999999997 h7.4 l-3.7,4.2 z" fill="#555"/>
<path d="M220.10000000000002,532.3 h7.4 l-3.7,4.2 z" fill="#555"/>
<path d="M220.10000000000002,562.3 h7.4 l-3.7,4.2 z" fill="#555"/>
<path d="M223.5,618.0 l3.7,-3.6 l3.7,3.6 z M223.5,621.2 l3.7,3.6 l3.7,-3.6 z" fill="#a4a4a4"/>
<path d="M223.5,645.0 l3.7,-3.6 l3.7,3.6 z M223.5,648.2 l3.7,3.6 l3.7,-3.6 z" fill="#a4a4a4"/>
<path d="M219.9,746.1 h7.4 l-3.7,4.2 z" fill="#555"/>
<path d="M104.4,773.6 l2.6,3 l4.4,-7" fill="none" stroke="#1a1a1a" stroke-width="1.5"/>
<path d="M223.1,797.5 l4,-4.4 l4,4.4 z M223.1,800.5 l4,4.4 l4,-4.4 z" fill="#3c3c3c"/>
<path d="M223.1,824.1 l4,-4.4 l4,4.4 z M223.1,827.1 l4,4.4 l4,-4.4 z" fill="#3c3c3c"/>
<path d="M81.6,887.8 H194" stroke="#a9a9a9" stroke-width="2" stroke-dasharray="7 1.66"/>
<path d="M81.6,906.4 H194" stroke="#a9a9a9" stroke-width="2" stroke-dasharray="7 1.66"/>
<path d="M1086.5,937.9 h7.4 l-3.7,4.2 z" fill="#555"/>
<path d="M1581.6,141.2 l7.8,7.8 m0,-7.8 l-7.8,7.8" stroke="#1e1e1e" stroke-width="1.2"/>
<path d="M1669,139.2 h12.4 l-6.2,7.6 z" fill="#383838"/>
<path d="M1695.0,141.6 v-2 h5.2 v4.6 h-1.8" fill="none" stroke="#111" stroke-width="1.5"/>
<rect x="1693.0" y="142" width="5.4" height="4.8" fill="none" stroke="#111" stroke-width="1.5"/>
<path d="M1713.4,140.2 l7.6,7.6 m0,-7.6 l-7.6,7.6" stroke="#1e1e1e" stroke-width="1.25"/>
<path d="M0,0 H2.3 C1.1,1.6 0.4,3.6 0,6.6 Z" fill="#000"/>
<path d="M25.099999999999998,56.300000000000004 H34.0 L38.4,60.7 V73.6 H25.099999999999998 Z" fill="#fbfbfb" stroke="#6c747b" stroke-width="1.4" stroke-linejoin="round"/>
<path d="M33.8,56.2 V60.9 H38.599999999999994 Z" fill="#59626a"/>
<rect x="27.599999999999998" y="63.8" width="8.2" height="3" fill="#fbe4e1"/>
<path d="M27.599999999999998,63.2 H35.4" stroke="#a98585" stroke-width="0.9"/>
<path d="M27.599999999999998,66.6 H32.0 M27.599999999999998,70.2 H31.2" stroke="#f0904a" stroke-width="1.1"/>
<path d="M27.599999999999998,68.4 H29.599999999999998" stroke="#e8b0a0" stroke-width="0.9"/>
<circle cx="35.7" cy="70.8" r="3.9" fill="#fdf6f0"/>
<path d="M33.099999999999994,70.7 H38.099999999999994 M35.599999999999994,68.2 V73.2" stroke="#f5821f" stroke-width="1.6"/>
<path d="M63.900000000000006,56.300000000000004 H72.8 L77.2,60.7 V73.6 H63.900000000000006 Z" fill="#fbfbfb" stroke="#6c747b" stroke-width="1.4" stroke-linejoin="round"/>
<path d="M72.60000000000001,56.2 V60.9 H77.4 Z" fill="#59626a"/>
<rect x="65.60000000000001" y="61.800000000000004" width="9.8" height="10.4" fill="#d3edf8"/>
<path d="M66.4,63.2 H74.2" stroke="#8aa0ad" stroke-width="0.9"/>
<path d="M66.4,66.6 H70.4 M66.4,70.2 H68.8" stroke="#3fa7dc" stroke-width="1.1"/>
<circle cx="75.0" cy="71.2" r="3.9" fill="#dff2fa"/>
<path d="M75.0,73.8 V69.2 M72.8,71.0 L75.0,68.8 L77.2,71.0" stroke="#4c9fd0" stroke-width="1.5" fill="none"/>
<path d="M106.10000000000001,56.300000000000004 H115.0 L119.4,60.7 V73.6 H106.10000000000001 Z" fill="#fbfbfb" stroke="#6c747b" stroke-width="1.4" stroke-linejoin="round"/>
<path d="M114.80000000000001,56.2 V60.9 H119.60000000000001 Z" fill="#59626a"/>
<rect x="107.80000000000001" y="61.800000000000004" width="9.8" height="10.4" fill="#fdf3cf"/>
<path d="M108.60000000000001,63.2 H116.4" stroke="#b39a8a" stroke-width="0.9"/>
<path d="M108.60000000000001,66.6 H112.60000000000001 M108.60000000000001,70.2 H111.0" stroke="#f7a233" stroke-width="1.1"/>
<path d="M108.60000000000001,68.4 H111.60000000000001" stroke="#f9c46a" stroke-width="0.9"/>
<circle cx="117.0" cy="71.0" r="3.9" fill="#fdf2d6"/>
<path d="M115.10000000000001,69.0 L118.9,72.8 M118.9,69.0 L115.10000000000001,72.8" stroke="#f7941d" stroke-width="1.5"/>
<path d="M147.89999999999998,56.300000000000004 H156.79999999999998 L161.2,60.7 V73.6 H147.89999999999998 Z" fill="#fbfbfb" stroke="#6c747b" stroke-width="1.4" stroke-linejoin="round"/>
<path d="M156.6,56.2 V60.9 H161.39999999999998 Z" fill="#59626a"/>
<rect x="149.39999999999998" y="57.2" width="6.8" height="3" fill="#dbe6ec"/>
<path d="M151.2,57.6 h1.2 v1.6 h-1.2z M153.39999999999998,57.6 h1.2 v1.6 h-1.2z" fill="#7c8a93"/>
<rect x="150.39999999999998" y="63.0" width="8" height="8.2" fill="#dceff8" stroke="#76848d" stroke-width="1"/>
<path d="M152.0,65.2 H156.6 M152.0,67.0 H154.79999999999998" stroke="#5fa9cf" stroke-width="0.9"/>
<path d="M150.79999999999998,70.6 H153.39999999999998" stroke="#3fc04d" stroke-width="1.1"/>
<circle cx="158.79999999999998" cy="71.0" r="3.9" fill="#f7fafb"/>
<path d="M156.39999999999998,70.8 L158.2,72.6 L161.39999999999998,69.0" stroke="#8eb2c4" stroke-width="1.5" fill="none"/>
<path d="M195.0,56.300000000000004 H203.9 L208.3,60.7 V73.6 H195.0 Z" fill="#fbfbfb" stroke="#6c747b" stroke-width="1.4" stroke-linejoin="round"/>
<path d="M203.70000000000002,56.2 V60.9 H208.5 Z" fill="#59626a"/>
<rect x="196.5" y="57.2" width="6.8" height="3" fill="#dbe6ec"/>
<path d="M198.3,57.6 h1.2 v1.6 h-1.2z M200.5,57.6 h1.2 v1.6 h-1.2z" fill="#7c8a93"/>
<rect x="197.5" y="63.0" width="8" height="8.2" fill="#dceff8" stroke="#76848d" stroke-width="1"/>
<path d="M199.10000000000002,65.2 H203.70000000000002 M199.10000000000002,67.0 H201.9" stroke="#5fa9cf" stroke-width="0.9"/>
<circle cx="206.10000000000002" cy="71.2" r="3.9" fill="#dff1f9"/>
<path d="M203.9,73.4 L207.9,69.2" stroke="#4689ad" stroke-width="2.2" stroke-linecap="round"/>
<path d="M204.9,72.2 L206.70000000000002,70.4" stroke="#d8ecf5" stroke-width="0.8"/>
<path d="M255.8,57.7 L248.4,63.6 L255.6,69.2 M248.9,63.6 H258.6 A4.7,4.7 0 0 1 258.6,73 H256.6" fill="none" stroke="#636d76" stroke-width="1.7" stroke-linecap="round" stroke-linejoin="round"/>
<path d="M298.3,57.7 L305.7,63.6 L298.5,69.2 M305.2,63.6 H295.5 A4.7,4.7 0 0 0 295.5,73 H297.5" fill="none" stroke="#636d76" stroke-width="1.7" stroke-linecap="round" stroke-linejoin="round"/>
<path d="M342.2,56.2 V71.6 L345.9,68.6 L348.4,74.2 L351,73 L348.6,67.6 L353.6,66.7 Z" fill="#6e7c86"/>
<path d="M345.3,62 L352.4,66.4 L348,67.2 L350.6,72.8 L349,73.5 L346.4,67.9 L345.3,68.9 Z" fill="#3cb64a"/>
<path transform="translate(378.9,55.6) scale(1.1,1)" d="M5.5,10.4 V3.3 a1.25,1.25 0 0 1 2.5,0 V9.2 M8,3.3 V1.9 a1.25,1.25 0 0 1 2.5,0 V9.2 M10.5,2.8 a1.25,1.25 0 0 1 2.5,0 V9.6 M13,5.2 a1.25,1.25 0 0 1 2.5,0 V12.4 c0,4 -2.4,6.4 -5.4,6.4 h-1.2 c-2.4,0 -3.9,-1.4 -5.1,-3.6 L1.1,11 c-0.8,-1.6 1.2,-2.7 2.2,-1.2 L5.5,12.8 V10.4" fill="none" stroke="#6c767e" stroke-width="1.25" stroke-linecap="round" stroke-linejoin="round"/>
<circle cx="430.2" cy="63.4" r="6.4" fill="#d4eef8" stroke="#5ab3d8" stroke-width="1.5"/>
<path d="M427.2,63.4 H433.2 M430.2,60.4 V66.4" stroke="#4aa6cf" stroke-width="1.4"/>
<path d="M435,68.4 L440.4,73.2" stroke="#4a535b" stroke-width="1.7" stroke-linecap="round"/>
<circle cx="489.2" cy="63.2" r="6.4" fill="#eaf6fb" stroke="#3c7f9f" stroke-width="1.5"/>
<path d="M486,63.2 H492.4" stroke="#7c8a93" stroke-width="1.4"/>
<path d="M494,68.2 L499.4,73" stroke="#4a535b" stroke-width="1.7" stroke-linecap="round"/>
<circle cx="550.2" cy="65.2" r="5.1" fill="#5b6670"/>
<path d="M579.8,73 L596.5,57.3" stroke="#5b6670" stroke-width="1.7"/>
<circle cx="628.3" cy="65" r="9" fill="none" stroke="#5b6670" stroke-width="2.7"/>
<rect x="672.4" y="57.4" width="20.6" height="15.2" fill="#cdd4d9" stroke="#78828a" stroke-width="1"/>
<path d="M740.8,56.7 L750.5,58.4 L751.2,69.7 L740.1,73.2 L734.6,66.9 Z" fill="none" stroke="#5b6670" stroke-width="1.4"/>
<circle cx="740.8" cy="56.7" r="1.6" fill="#5b6670"/>
<circle cx="750.5" cy="58.4" r="1.6" fill="#5b6670"/>
<circle cx="751.2" cy="69.7" r="1.6" fill="#5b6670"/>
<circle cx="740.1" cy="73.2" r="1.6" fill="#5b6670"/>
<circle cx="734.6" cy="66.9" r="1.6" fill="#5b6670"/>
<path d="M279.2,150 V165.8 L283.4,162.4 L286.4,169 L289,167.8 L286.2,161.4 L290.8,160.4 Z" fill="none" stroke="#1e2b4a" stroke-width="1.3" stroke-linejoin="miter"/>
<path d="M279,192.5 V182.4 a1.5,1.5 0 0 1 3,0 V189 c1,-0.9 2.3,-0.5 2.6,0.6 c0.9,-0.8 2.2,-0.4 2.5,0.7 c1.2,-0.6 2.4,0.2 2.4,1.5 V197 c0,3 -1.6,5.4 -4.6,5.4 h-2.2 c-2.4,0 -4.1,-1.5 -5,-3.6 l-1.2,-2.8 c-0.7,-1.6 1.1,-2.8 2.5,-1.5 Z" fill="none" stroke="#1e2b4a" stroke-width="1.25" stroke-linejoin="round"/>
<path d="M282.4,194.4 V198.6 M284.6,194.4 V198.6 M286.8,194.4 V198.6" stroke="#1e2b4a" stroke-width="0.9"/>
<path transform="translate(274.9,213.3) scale(1.07,1.01)" d="M5.5,10.4 V3.3 a1.25,1.25 0 0 1 2.5,0 V9.2 M8,3.3 V1.9 a1.25,1.25 0 0 1 2.5,0 V9.2 M10.5,2.8 a1.25,1.25 0 0 1 2.5,0 V9.6 M13,5.2 a1.25,1.25 0 0 1 2.5,0 V12.4 c0,4 -2.4,6.4 -5.4,6.4 h-1.2 c-2.4,0 -3.9,-1.4 -5.1,-3.6 L1.1,11 c-0.8,-1.6 1.2,-2.7 2.2,-1.2 L5.5,12.8 V10.4" fill="none" stroke="#5a7682" stroke-width="1.25" stroke-linecap="round" stroke-linejoin="round"/>
<circle cx="284.3" cy="262.1" r="5.3" fill="#566169"/>
<path d="M275.6,302.2 L292.6,286.4" stroke="#566169" stroke-width="2.1"/>
<circle cx="284.3" cy="326.2" r="8.9" fill="none" stroke="#566169" stroke-width="3"/>
<rect x="273.7" y="350.8" width="20.4" height="14.4" fill="#b0c3ce" stroke="#6b808c" stroke-width="1.2" stroke-dasharray="1.6 0.4"/>
<path d="M281.9,381 L291.8,383.4 L292.7,394.7 L281,398.3 L275.9,391.6 Z" fill="none" stroke="#56707c" stroke-width="1.4"/>
<circle cx="281.9" cy="381" r="1.9" fill="#56707c"/>
<circle cx="291.8" cy="383.4" r="1.9" fill="#56707c"/>
<circle cx="292.7" cy="394.7" r="1.9" fill="#56707c"/>
<circle cx="281" cy="398.3" r="1.9" fill="#56707c"/>
<circle cx="275.9" cy="391.6" r="1.9" fill="#56707c"/>
<rect x="275.4" y="420.6" width="10.4" height="14.8" fill="none" stroke="#46515b" stroke-width="1.3" stroke-dasharray="2.4 1.2"/>
<path d="M284.3,422.2 L277,433.4 H290.6 Z" fill="none" stroke="#46515b" stroke-width="1.6" stroke-linejoin="round"/>
<circle cx="284.3" cy="422.2" r="2.4" fill="#46515b"/><circle cx="277.2" cy="433.4" r="2.2" fill="#46515b"/><circle cx="290.4" cy="433.4" r="1.6" fill="#46515b"/>
<rect x="276.6" y="453.6" width="15.2" height="12.4" rx="1.5" fill="none" stroke="#46515b" stroke-width="1.4" stroke-dasharray="2.6 1.1"/>
<path d="M284.2,454.4 L277.8,465 H290.8 Z" fill="none" stroke="#46515b" stroke-width="1.9" stroke-linejoin="round"/>
<rect x="275.6" y="488.2" width="17" height="10.8" fill="none" stroke="#46515b" stroke-width="1.3" stroke-dasharray="2 1"/>
<path d="M281.2,488.8 L276.6,497.6 H285.8 Z M287.2,488.8 L282.6,497.6 H291.8 Z" fill="none" stroke="#46515b" stroke-width="1.6" stroke-linejoin="round"/>
<path d="M276,494.8 H292.4" stroke="#46515b" stroke-width="1.4"/></svg>
</div>
</body></html>
